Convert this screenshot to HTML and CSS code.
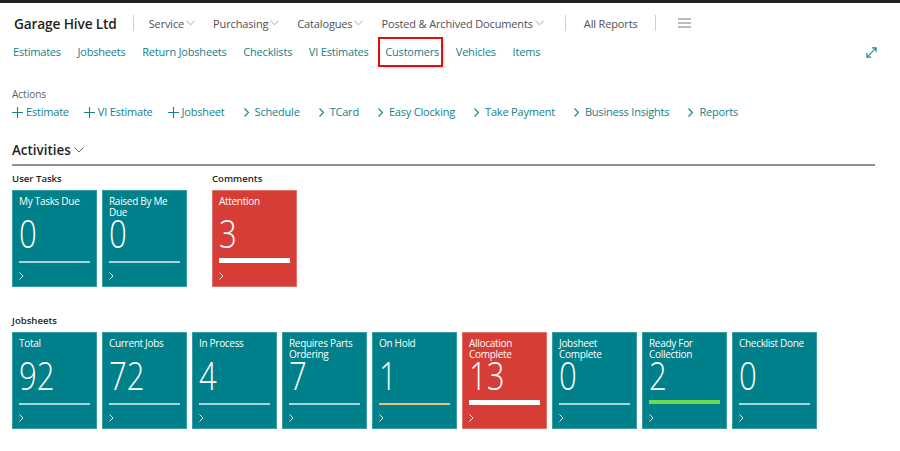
FILE: index.html
```html
<!DOCTYPE html>
<html>
<head>
<meta charset="utf-8">
<link rel="stylesheet" href="styles.css">
</head>
<body>
<div class="topbar"></div>
<header class="header">
  <div class="company">Garage Hive Ltd</div>
  <div class="sep sep1"></div>
  <nav class="menu">
    <span class="menu-item">Service<svg class="dd" viewBox="0 0 10 6"><path d="M0.5 0.5 L5 5 L9.5 0.5" /></svg></span>
    <span class="menu-item">Purchasing<svg class="dd" viewBox="0 0 10 6"><path d="M0.5 0.5 L5 5 L9.5 0.5" /></svg></span>
    <span class="menu-item">Catalogues<svg class="dd" viewBox="0 0 10 6"><path d="M0.5 0.5 L5 5 L9.5 0.5" /></svg></span>
    <span class="menu-item">Posted &amp; Archived Documents<svg class="dd" viewBox="0 0 10 6"><path d="M0.5 0.5 L5 5 L9.5 0.5" /></svg></span>
  </nav>
  <div class="sep sep2"></div>
  <span class="menu-item">All Reports</span>
  <div class="sep sep3"></div>
  <svg class="hamb" viewBox="0 0 13 10"><path d="M0 1 H13 M0 5 H13 M0 9 H13" /></svg>
</header>
<div class="links-row">
  <nav class="links">
    <a>Estimates</a>
    <a>Jobsheets</a>
    <a>Return Jobsheets</a>
    <a>Checklists</a>
    <a>VI Estimates</a>
    <a class="highlight">Customers</a>
    <a>Vehicles</a>
    <a>Items</a>
  </nav>
  <svg class="expand" viewBox="0 0 14 14"><path d="M2 12 L12 2 M7.5 2 H12 V6.5 M2 7.5 V12 H6.5" /></svg>
</div>

<section class="actions">
  <div class="actions-label">Actions</div>
  <div class="action-list">
    <a><svg class="ic-plus" viewBox="0 0 11 11"><path d="M5.5 0 V11 M0 5.5 H11" /></svg>Estimate</a>
    <a><svg class="ic-plus" viewBox="0 0 11 11"><path d="M5.5 0 V11 M0 5.5 H11" /></svg>VI Estimate</a>
    <a><svg class="ic-plus" viewBox="0 0 11 11"><path d="M5.5 0 V11 M0 5.5 H11" /></svg>Jobsheet</a>
    <a><svg class="ic-chev" viewBox="0 0 5 9"><path d="M0.5 0.5 L4.5 4.5 L0.5 8.5" /></svg>Schedule</a>
    <a><svg class="ic-chev" viewBox="0 0 5 9"><path d="M0.5 0.5 L4.5 4.5 L0.5 8.5" /></svg>TCard</a>
    <a><svg class="ic-chev" viewBox="0 0 5 9"><path d="M0.5 0.5 L4.5 4.5 L0.5 8.5" /></svg>Easy Clocking</a>
    <a><svg class="ic-chev" viewBox="0 0 5 9"><path d="M0.5 0.5 L4.5 4.5 L0.5 8.5" /></svg>Take Payment</a>
    <a><svg class="ic-chev" viewBox="0 0 5 9"><path d="M0.5 0.5 L4.5 4.5 L0.5 8.5" /></svg>Business Insights</a>
    <a><svg class="ic-chev" viewBox="0 0 5 9"><path d="M0.5 0.5 L4.5 4.5 L0.5 8.5" /></svg>Reports</a>
  </div>
</section>

<section class="activities">
  <h2 class="act-title">Activities<svg class="dd dd-big" viewBox="0 0 10 6"><path d="M0.5 0.5 L5 5 L9.5 0.5" /></svg></h2>
  <div class="groups">
    <div class="group">
      <div class="group-label">User Tasks</div>
      <div class="tiles">
        <div class="tile"><div class="t-title">My Tasks Due</div><div class="t-num"><span>0</span></div><div class="t-barwrap"><div class="t-bar"></div></div><svg class="t-chev" viewBox="0 0 5 8"><path d="M0.5 0.5 L4 4 L0.5 7.5" /></svg></div>
        <div class="tile"><div class="t-title">Raised By Me Due</div><div class="t-num"><span>0</span></div><div class="t-barwrap"><div class="t-bar"></div></div><svg class="t-chev" viewBox="0 0 5 8"><path d="M0.5 0.5 L4 4 L0.5 7.5" /></svg></div>
      </div>
    </div>
    <div class="group">
      <div class="group-label">Comments</div>
      <div class="tiles">
        <div class="tile red"><div class="t-title">Attention</div><div class="t-num"><span>3</span></div><div class="t-barwrap"><div class="t-bar thick"></div></div><svg class="t-chev" viewBox="0 0 5 8"><path d="M0.5 0.5 L4 4 L0.5 7.5" /></svg></div>
      </div>
    </div>
  </div>
  <div class="group group-js">
    <div class="group-label">Jobsheets</div>
    <div class="tiles">
      <div class="tile"><div class="t-title">Total</div><div class="t-num"><span>92</span></div><div class="t-barwrap"><div class="t-bar"></div></div><svg class="t-chev" viewBox="0 0 5 8"><path d="M0.5 0.5 L4 4 L0.5 7.5" /></svg></div>
      <div class="tile"><div class="t-title">Current Jobs</div><div class="t-num"><span>72</span></div><div class="t-barwrap"><div class="t-bar"></div></div><svg class="t-chev" viewBox="0 0 5 8"><path d="M0.5 0.5 L4 4 L0.5 7.5" /></svg></div>
      <div class="tile"><div class="t-title">In Process</div><div class="t-num"><span>4</span></div><div class="t-barwrap"><div class="t-bar"></div></div><svg class="t-chev" viewBox="0 0 5 8"><path d="M0.5 0.5 L4 4 L0.5 7.5" /></svg></div>
      <div class="tile"><div class="t-title">Requires Parts Ordering</div><div class="t-num"><span>7</span></div><div class="t-barwrap"><div class="t-bar"></div></div><svg class="t-chev" viewBox="0 0 5 8"><path d="M0.5 0.5 L4 4 L0.5 7.5" /></svg></div>
      <div class="tile"><div class="t-title">On Hold</div><div class="t-num"><span>1</span></div><div class="t-barwrap"><div class="t-bar amber"></div></div><svg class="t-chev" viewBox="0 0 5 8"><path d="M0.5 0.5 L4 4 L0.5 7.5" /></svg></div>
      <div class="tile red"><div class="t-title">Allocation Complete</div><div class="t-num"><span>13</span></div><div class="t-barwrap"><div class="t-bar thick"></div></div><svg class="t-chev" viewBox="0 0 5 8"><path d="M0.5 0.5 L4 4 L0.5 7.5" /></svg></div>
      <div class="tile"><div class="t-title">Jobsheet Complete</div><div class="t-num"><span>0</span></div><div class="t-barwrap"><div class="t-bar"></div></div><svg class="t-chev" viewBox="0 0 5 8"><path d="M0.5 0.5 L4 4 L0.5 7.5" /></svg></div>
      <div class="tile"><div class="t-title">Ready For Collection</div><div class="t-num"><span>2</span></div><div class="t-barwrap"><div class="t-bar green"></div></div><svg class="t-chev" viewBox="0 0 5 8"><path d="M0.5 0.5 L4 4 L0.5 7.5" /></svg></div>
      <div class="tile"><div class="t-title">Checklist Done</div><div class="t-num"><span>0</span></div><div class="t-barwrap"><div class="t-bar"></div></div><svg class="t-chev" viewBox="0 0 5 8"><path d="M0.5 0.5 L4 4 L0.5 7.5" /></svg></div>
    </div>
  </div>
</section>
</body>
</html>
```

FILE: styles.css
```css
* { box-sizing: border-box; }
html, body { margin: 0; padding: 0; background: #fff; }
body {
  font-family: "Open Sans", "Noto Sans", "Liberation Sans", sans-serif;
  color: #212121;
  width: 900px;
  height: 451px;
  overflow: hidden;
}
.topbar { height: 3px; background: #1f1f1f; }

.header {
  display: flex;
  align-items: center;
  height: 40px;
  padding-left: 14px;
}
.company { font-size: 13.7px; font-weight: 600; color: #1f1f1f; letter-spacing: -0.15px; }
.sep { width: 1px; height: 16px; background: #cfcfcf; }
.sep1 { margin: 0 15px 0 16px; }
.sep2 { margin: 0 18px 0 21px; }
.sep3 { margin: 0 22px 0 17px; }
.menu { display: flex; gap: 18px; }
.menu-item { font-size: 11px; letter-spacing: -0.15px; color: #505050; display: flex; align-items: center; }
.dd { width: 9px; height: 6px; margin-left: 2px; fill: none; stroke: #9a9a9a; stroke-width: 1; }
.hamb { width: 13px; height: 10px; fill: none; stroke: #7a7a7a; stroke-width: 1.1; }

.links-row { display: flex; align-items: center; height: 18px; padding: 0 22px 0 13px; justify-content: space-between; }
.links { display: flex; gap: 16.7px; }
.links a, .action-list a { color: #12808a; font-size: 11px; letter-spacing: -0.2px; line-height: 16px; }
.links a.highlight {
  display: inline-block;
  outline: 2px solid #e00b0b;
  padding: 5px 2px 5px 5px;
  margin: -5px -2px -5px -5px;
  box-shadow: 2px 2px 3px rgba(0,0,0,0.35);
}
.expand { width: 13px; height: 13px; fill: none; stroke: #1a8e95; stroke-width: 1.2; }

.actions { padding: 26px 12px 0 12px; }
.actions-label { font-size: 10px; color: #606060; height: 14px; line-height: 14px; }
.action-list { display: flex; gap: 15px; margin-top: 3px; }
.action-list a { display: flex; align-items: center; }
.ic-plus { width: 11px; height: 11px; margin-right: 3px; fill: none; stroke: #1a808a; stroke-width: 1.1; }
.ic-chev { width: 5px; height: 9px; margin-left: 4px; margin-right: 6px; fill: none; stroke: #1a808a; stroke-width: 1.1; }

.activities { padding: 20px 25px 0 12px; }
.act-title {
  margin: 0;
  font-size: 13.4px;
  font-weight: 600;
  color: #1f1f1f;
  display: flex;
  align-items: center;
  height: 20px;
  padding-bottom: 4px;
  border-bottom: 2px solid #8d929a;
  box-sizing: content-box;
}
.dd-big { width: 10px; height: 6px; margin-left: 3px; stroke: #6a6a6a; }

.groups { display: flex; gap: 25px; margin-top: 6px; }
.group-label { font-size: 9.6px; font-weight: 600; color: #1f1f1f; height: 14px; line-height: 14px; }
.tiles { display: flex; gap: 5px; margin-top: 4px; }
.group-js { margin-top: 27px; }

.tile {
  width: 85px;
  height: 97px;
  background: #00808a;
  border: 1px solid #3a9ca3;
  color: #fff;
  padding: 5px 6px 0 6px;
  display: flex;
  flex-direction: column;
}
.tile.red { background: #d63d37; border-color: #e2706a; }
.t-title { font-size: 10px; letter-spacing: -0.3px; line-height: 11px; height: 22px; }
.t-num { height: 31px; line-height: 31px; }
.t-num span { display: inline-block; font-size: 38px; font-weight: 300; transform: scaleX(0.82); transform-origin: left center; }
.t-barwrap { height: 14px; display: flex; flex-direction: column; justify-content: flex-end; }
.t-bar { height: 2px; background: #a9d3d6; }
.t-bar.thick { height: 5px; background: #fff; }
.t-bar.amber { background: #e8c27c; }
.t-bar.green { height: 4px; margin-bottom: 1px; background: #6bdb4f; }
.t-chev { width: 5px; height: 8px; margin-top: 9px; fill: none; stroke: #e6f3f3; stroke-width: 1; }
```
